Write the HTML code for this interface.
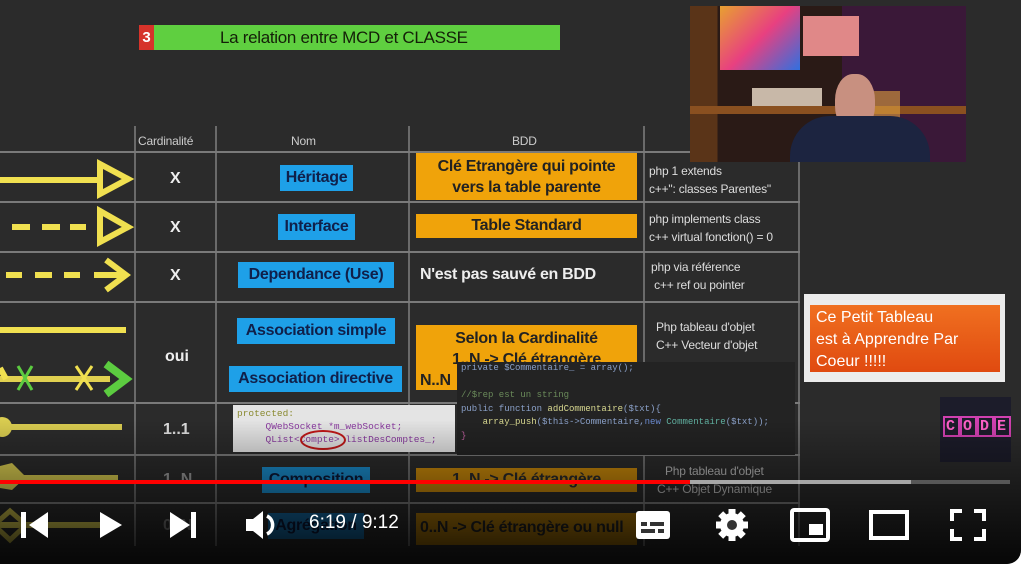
<!DOCTYPE html>
<html><head><meta charset="utf-8"><style>
*{margin:0;padding:0;box-sizing:border-box}
body{width:1021px;height:564px;overflow:hidden;background:#fff;font-family:"Liberation Sans",sans-serif;position:relative}
#v{position:absolute;left:0;top:0;width:1021px;height:564px;background:#2b2b2b;border-bottom-right-radius:14px;overflow:hidden}
.a{position:absolute}
.hl{position:absolute;height:2px;background:#7a7a7a;left:0;width:800px}
.vl{position:absolute;width:2px;background:#6a6a6a}
.b{position:absolute;background:#1ea0e8;color:#10204a;font-weight:bold;font-size:16px;text-align:center;line-height:26px;letter-spacing:-0.3px}
.o{position:absolute;background:#f0a30a;color:#222;font-weight:bold;font-size:16px;text-align:center;letter-spacing:-0.3px}
.w{position:absolute;color:#eee;font-weight:bold;font-size:16px}
.s{position:absolute;color:#ddd;font-size:12px;line-height:18px;letter-spacing:-0.2px}
.mono{font-family:"Liberation Mono",monospace}
</style></head><body>
<div id="v">
<div class="a" style="left:139px;top:25px;width:15px;height:25px;background:#d6332a;color:#fff;font-weight:bold;font-size:15px;line-height:25px;text-align:center">3</div>
<div class="a" style="left:154px;top:25px;width:406px;height:25px;background:#5fcf40;color:#142008;font-size:17px;line-height:25px;padding-left:66px;letter-spacing:-0.3px">La relation entre MCD et CLASSE</div>

<div class="vl" style="left:134px;top:126px;height:420px"></div>
<div class="vl" style="left:215px;top:126px;height:420px"></div>
<div class="vl" style="left:408px;top:126px;height:420px"></div>
<div class="vl" style="left:643px;top:126px;height:420px"></div>
<div class="vl" style="left:798px;top:152px;height:394px"></div>
<div class="hl" style="top:151px"></div>
<div class="hl" style="top:201px"></div>
<div class="hl" style="top:251px"></div>
<div class="hl" style="top:301px"></div>
<div class="hl" style="top:402px"></div>
<div class="hl" style="top:454px"></div>
<div class="hl" style="top:502px"></div>

<div class="s" style="left:138px;top:132px;color:#ccc">Cardinalité</div>
<div class="s" style="left:291px;top:132px;color:#ccc">Nom</div>
<div class="s" style="left:512px;top:132px;color:#ccc">BDD</div>

<svg class="a" style="left:0;top:150px" width="135" height="400">
<g stroke="#f0e050" stroke-width="6" fill="none">
<line x1="0" y1="30" x2="100" y2="30"/><polygon points="100,14 128,29 100,44"/>
<line x1="12" y1="77" x2="30" y2="77"/><line x1="42" y1="77" x2="60" y2="77"/><line x1="70" y1="77" x2="86" y2="77"/><polygon points="100,61 128,77 100,92"/>
<line x1="6" y1="125" x2="22" y2="125"/><line x1="35" y1="125" x2="52" y2="125"/><line x1="64" y1="125" x2="80" y2="125"/><line x1="94" y1="125" x2="126" y2="125"/><polyline points="106,110 126,125 106,140"/>
<line x1="0" y1="180" x2="126" y2="180"/>
<line x1="0" y1="229" x2="110" y2="229" stroke="#e0d050"/>
<line x1="0" y1="218" x2="6" y2="229"/>
<line x1="76" y1="216" x2="92" y2="240" stroke-width="3"/><line x1="92" y1="216" x2="76" y2="240" stroke-width="3"/>
</g>
<g stroke="#5ccc40" stroke-width="3"><line x1="18" y1="216" x2="32" y2="240"/><line x1="32" y1="216" x2="18" y2="240"/></g>
<polyline points="106,214 126,229 106,244" stroke="#5ccc40" stroke-width="8" fill="none"/>
<g stroke="#d9cc50" stroke-width="6" fill="none"><line x1="0" y1="277" x2="122" y2="277"/><line x1="0" y1="328" x2="118" y2="328"/><line x1="0" y1="375" x2="100" y2="375"/></g>
<circle cx="2" cy="277" r="10" fill="#d9cc50"/>
<polygon points="0,316 12,313 26,327 12,340 0,338" fill="#d9cc50"/>
<polygon points="10,361 26,375 10,390 -6,375" stroke="#c8bb48" stroke-width="5" fill="none"/>
</svg>

<div class="w" style="left:170px;top:170px">X</div>
<div class="w" style="left:170px;top:219px">X</div>
<div class="w" style="left:170px;top:267px">X</div>
<div class="w" style="left:165px;top:348px">oui</div>
<div class="w" style="left:163px;top:421px;color:#ddd">1..1</div>
<div class="w" style="left:163px;top:471px;color:#999">1..N</div>
<div class="w" style="left:163px;top:517px;color:#777">0..N</div>

<div class="b" style="left:280px;top:165px;width:73px">Héritage</div>
<div class="b" style="left:278px;top:214px;width:77px">Interface</div>
<div class="b" style="left:238px;top:262px;width:156px">Dependance (Use)</div>
<div class="b" style="left:237px;top:318px;width:158px">Association simple</div>
<div class="b" style="left:229px;top:366px;width:173px">Association directive</div>
<div class="b" style="left:262px;top:467px;width:108px;color:#0b1838;background:#1a8ccc">Composition</div>
<div class="b" style="left:268px;top:513px;width:96px;color:#0b1838;background:#1468a0">Agrégation</div>

<div class="o" style="left:416px;top:153px;width:221px;height:47px;line-height:21px;padding-top:3px">Clé Etrangère qui pointe<br>vers la table parente</div>
<div class="o" style="left:416px;top:214px;width:221px;height:24px;line-height:24px">Table Standard</div>
<div class="w" style="left:420px;top:266px;letter-spacing:-0.3px">N'est pas sauvé en BDD</div>
<div class="o" style="left:416px;top:325px;width:221px;height:65px;line-height:21px;padding-top:3px">Selon la Cardinalité<br>1..N -&gt; Clé étrangère<br><span style="display:block;text-align:left;padding-left:4px">N..N</span></div>
<div class="o" style="left:416px;top:468px;width:221px;height:24px;line-height:24px;background:#c8880a;color:#2a2a2a">1..N -&gt; Clé étrangère</div>
<div class="o" style="left:416px;top:513px;width:221px;height:32px;line-height:30px;background:#a87408;color:#222;text-align:left;padding-left:4px">0..N -&gt; Clé étrangère ou null</div>

<div class="s" style="left:649px;top:162px">php 1 extends<br>c++": classes Parentes"</div>
<div class="s" style="left:649px;top:210px">php implements class<br>c++ virtual fonction() = 0</div>
<div class="s" style="left:651px;top:258px">php via référence<br>&nbsp;c++ ref ou pointer</div>
<div class="s" style="left:656px;top:318px">Php tableau d'objet<br>C++ Vecteur d'objet</div>
<div class="s" style="left:665px;top:462px;color:#bbb">Php tableau d'objet<br><span style="margin-left:-8px">C++ Objet Dynamique</span></div>

<div class="a mono" style="left:457px;top:362px;width:338px;height:93px;background:#232323;font-size:9px;line-height:13.5px;padding:0 4px;color:#8aa0c8;white-space:pre">private $Commentaire_ = array();

<span style="color:#6a8a5a">//$rep est un string</span>
public function <span style="color:#d8d890">addCommentaire</span>($txt){
    <span style="color:#d8d890">array_push</span>($this-&gt;Commentaire,<span style="color:#6a8ad0">new</span> <span style="color:#60b0a0">Commentaire</span>($txt));
<span style="color:#c060a0">}</span></div>
<div class="a mono" style="left:233px;top:405px;width:222px;height:47px;background:#e4e4e4;font-size:9.5px;line-height:13px;padding:2px 4px;color:#8a3aa0;white-space:pre"><span style="color:#8a8a30">protected:</span>
     QWebSocket *m_webSocket;
     QList&lt;Compte&gt; listDesComptes_;</div>
<div class="a" style="left:300px;top:430px;width:46px;height:20px;border:2px solid #c01818;border-radius:50%"></div>

<div class="a" style="left:804px;top:294px;width:201px;height:88px;background:#ececec"></div>
<div class="a" style="left:810px;top:305px;width:190px;height:67px;background:linear-gradient(#f07020,#e04a10);color:#fff;font-size:16px;line-height:22px;padding:2px 6px">Ce Petit Tableau<br>est à Apprendre Par<br>Coeur !!!!!</div>

<div class="a" style="left:940px;top:397px;width:71px;height:65px;background:#1c1c2a"></div>
<div class="a mono" style="left:943px;top:418px;color:#ff60c8;font-weight:bold;font-size:15px;letter-spacing:2px;"><span style="border:2px solid #d040b0;padding:0 1px">C</span><span style="border:2px solid #d040b0;padding:0 1px">O</span><span style="border:2px solid #d040b0;padding:0 1px">D</span><span style="border:2px solid #d040b0;padding:0 1px">E</span></div>

<div class="a" style="left:690px;top:6px;width:276px;height:156px;background:linear-gradient(90deg,#5a3418 0 10%,#2a1a16 10% 55%,#3a1838 55% 100%);overflow:hidden">
<div class="a" style="left:30px;top:0;width:80px;height:64px;background:linear-gradient(135deg,#e8a030,#e84080,#3070e0)"></div>
<div class="a" style="left:113px;top:10px;width:56px;height:40px;background:#e08888"></div>
<div class="a" style="left:0;top:100px;width:276px;height:8px;background:#8a5020"></div>
<div class="a" style="left:62px;top:82px;width:70px;height:18px;background:#c8b8a8"></div>
<div class="a" style="left:160px;top:85px;width:50px;height:40px;background:#e0a040;opacity:.6"></div>
<div class="a" style="left:145px;top:68px;width:40px;height:58px;border-radius:45%;background:#c89080"></div>
<div class="a" style="left:100px;top:110px;width:140px;height:60px;border-radius:40px 40px 0 0;background:#1c2440"></div>
</div>

<div class="a" style="left:0;top:420px;width:1021px;height:144px;background:linear-gradient(rgba(0,0,0,0),rgba(0,0,0,.85))"></div>

<div class="a" style="left:0;top:480px;width:1010px;height:4px;background:rgba(200,200,200,.35)"></div>
<div class="a" style="left:690px;top:480px;width:221px;height:4px;background:rgba(220,220,220,.6)"></div>
<div class="a" style="left:0;top:480px;width:690px;height:4px;background:#f00"></div>

<svg class="a" style="left:0;top:505px" width="1021" height="40" fill="#fff">
<rect x="21" y="7" width="5" height="26"/><polygon points="48,7 48,33 29,20"/>
<polygon points="100,7 122,20 100,33"/>
<polygon points="170,7 190,20 170,33"/><rect x="191" y="7" width="5" height="26"/>
<polygon points="246,14 253,14 263,6 263,34 253,26 246,26"/>
<path d="M267,11 A10,10 0 0 1 267,29" stroke="#fff" stroke-width="3.5" fill="none"/>
<rect x="636" y="6" width="34" height="28" rx="3"/>
<g fill="#333"><rect x="641" y="17" width="6" height="4"/><rect x="650" y="17" width="14" height="4"/><rect x="641" y="24" width="14" height="4"/><rect x="658" y="24" width="6" height="4"/></g>
<g transform="translate(732,20)"><circle r="12"/><g><rect x="-3.5" y="-16" width="7" height="32"/><rect x="-3.5" y="-16" width="7" height="32" transform="rotate(45)"/><rect x="-3.5" y="-16" width="7" height="32" transform="rotate(90)"/><rect x="-3.5" y="-16" width="7" height="32" transform="rotate(135)"/></g><circle r="5" fill="#333"/></g>
<rect x="792" y="5" width="36" height="30" rx="2" fill="none" stroke="#fff" stroke-width="4"/><rect x="809" y="19" width="14" height="11"/>
<rect x="871" y="7" width="36" height="26" fill="none" stroke="#fff" stroke-width="4"/>
<path d="M952,16 V6 H962 M974,6 H984 V16 M984,24 V34 H974 M962,34 H952 V24" stroke="#fff" stroke-width="4" fill="none"/>
</svg>
<div class="a" style="left:309px;top:512px;color:#fff;font-size:19px">6:19 / 9:12</div>
</div>
</body></html>
